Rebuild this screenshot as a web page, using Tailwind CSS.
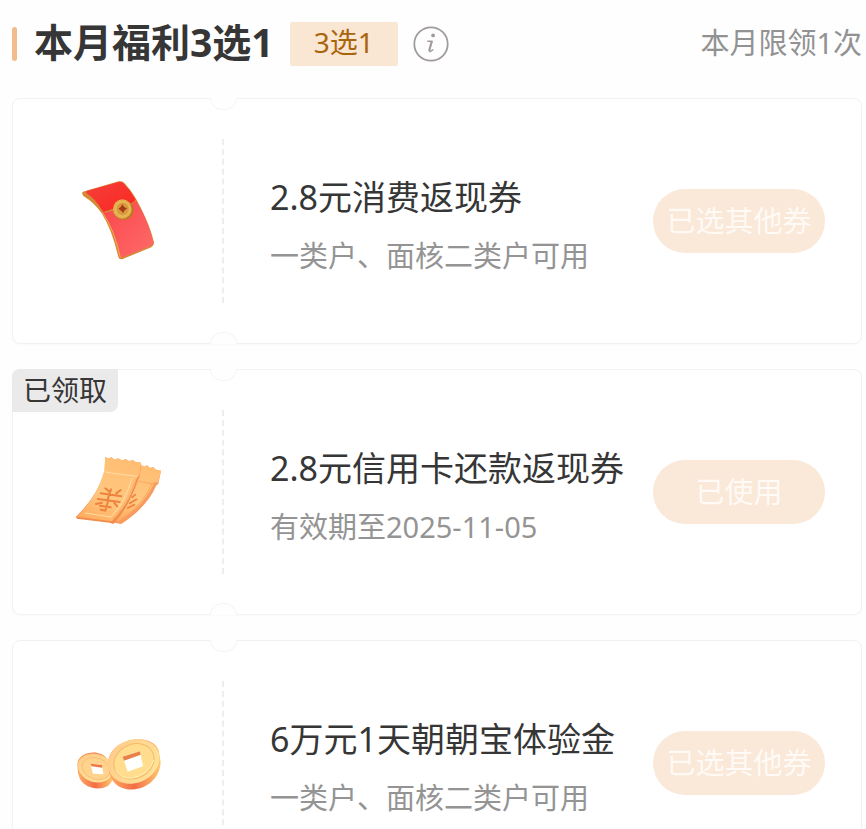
<!DOCTYPE html>
<html lang="zh-CN">
<head>
  <meta charset="UTF-8">
  <meta name="viewport" content="width=device-width, initial-scale=1.0">
  <title>本月福利3选1</title>
  <script src="https://cdn.jsdelivr.net/npm/@tailwindcss/browser@4"></script>
</head>
<body class="h-screen overflow-hidden bg-[#fefefe] font-['Noto_Sans','Noto_Sans_CJK_SC',sans-serif] text-[#363636]">
  <main class="pl-3 pr-1">
    <!-- Section header -->
    <header class="flex h-[98px] items-start justify-between pt-5">
      <div class="flex h-12 items-center">
        <span class="h-[34px] w-[5px] rounded-full bg-[#f1bd8c]"></span>
        <h1 class="ml-[17px] pb-1 text-[39px] leading-[44px] font-bold">本月福利3选1</h1>
        <span class="ml-4 rounded-xs bg-[#f9e6d3] px-6 pb-1 text-[28px] leading-10 text-[#a9650c]">3选1</span>
        <button type="button" aria-label="活动说明" class="ml-[15px]">
          <svg class="size-9" viewBox="0 0 36 36" fill="none">
            <circle cx="18" cy="18" r="16.7" stroke="#a19b9d" stroke-width="1.8" />
            <path d="M14.8 15.2h4.3l-2.6 9.2c-.3 1.6 1 1.6 3.4-.6" stroke="#a19b9d" stroke-width="1.4" stroke-linecap="round" stroke-linejoin="round" />
            <path d="M18.7 15.2l-2.6 9.6" stroke="#a19b9d" stroke-width="2" />
            <circle cx="20.1" cy="9.4" r="1.9" fill="#a19b9d" />
          </svg>
        </button>
      </div>
      <p class="text-[29px] leading-[46px] text-[#929292]">本月限领1次</p>
    </header>

    <!-- Coupons -->
    <ul class="space-y-[25px]">
      <li class="relative flex items-stretch rounded-lg border border-[#f2f2f2] bg-white shadow-xs shadow-black/2">
        <span class="absolute -top-px left-[197px] h-3 w-[27px] rounded-b-full border border-t-0 border-[#f5f5f5] bg-[#fefefe]"></span>
        <span class="absolute -bottom-px left-[197px] h-3 w-[27px] rounded-t-full border border-b-0 border-[#f5f5f5] bg-[#fefefe]"></span>
        <div class="flex w-[209px] items-center justify-center">
          <svg class="size-[120px]" viewBox="-6 3 360 360">
            <defs>
              <linearGradient id="flap" x1="0" y1="0" x2="1" y2="1">
                <stop offset="0" stop-color="#f5403c" />
                <stop offset="1" stop-color="#fb2620" />
              </linearGradient>
              <linearGradient id="envelope" x1="0" y1="0" x2="1" y2="1">
                <stop offset="0" stop-color="#f9474a" />
                <stop offset="1" stop-color="#ff6a6a" />
              </linearGradient>
            </defs>
            <path d="M66 100Q66 95 73 94L176 64Q188 62 194 70Q224 103 243 145Q270 198 282 247Q283 256 274 262L188 297Q178 300 175 291Q156 209 125 160Q103 128 70 108Z" fill="#d68a35" />
            <path d="M126 153L229 124Q263 180 280 245Q281 253 273 257L187 292Q180 293 178 286Q160 207 126 153Z" fill="url(#envelope)" />
            <path d="M127 157Q164 211 181 292" fill="none" stroke="#eeb057" stroke-width="3" />
            <path d="M70 103Q110 125 136 158L165 150L207 140L228 122L223 118L160 132L129 151Z" fill="#d78b36" />
            <path d="M80 93L176 66Q187 64 192 71Q212 91 227 119Q222 127 210 132L165 145L137 154Q129 155 125 149Q108 118 78 98Z" fill="url(#flap)" />
            <ellipse cx="190" cy="150" rx="31" ry="30" fill="#b97a20" />
            <ellipse cx="187" cy="147" rx="28" ry="29" fill="#e7ae4c" />
            <ellipse cx="188" cy="147" rx="20" ry="21" fill="#d79a3c" stroke="#f4ca75" stroke-width="2" />
            <path d="M187 132Q190 142 202 145Q192 150 189 159Q185 151 175 146Q184 142 187 132Z" fill="#a63b17" />
          </svg>
        </div>
        <div class="my-10 border-l-2 border-dashed border-[#eeeeee]"></div>
        <div class="min-w-0 flex-1 pt-[74px] pb-[67px] pl-[46px]">
          <h2 class="text-[34px] leading-[48px]">2.8元消费返现券</h2>
          <p class="mt-[15px] text-[29px] leading-10 text-[#949494]">一类户、面核二类户可用</p>
        </div>
        <button type="button" disabled class="mr-9 h-16 w-[172px] shrink-0 self-center rounded-full bg-[#fae8d9] text-[29px] text-[#fffaf5]">已选其他券</button>
      </li>

      <li class="relative flex items-stretch rounded-lg border border-[#f2f2f2] bg-white shadow-xs shadow-black/2">
        <span class="absolute -top-px -left-px rounded-tl-lg rounded-br-lg bg-[#eaeaea] px-[11px] text-[28px] leading-[43px]">已领取</span>
        <span class="absolute -top-px left-[197px] h-3 w-[27px] rounded-b-full border border-t-0 border-[#f5f5f5] bg-[#fefefe]"></span>
        <span class="absolute -bottom-px left-[197px] h-3 w-[27px] rounded-t-full border border-b-0 border-[#f5f5f5] bg-[#fefefe]"></span>
        <div class="flex w-[209px] items-center justify-center">
          <svg class="size-[120px]" viewBox="-6 6 360 360">
            <defs>
              <linearGradient id="ticket" x1="0.7" y1="0" x2="0.2" y2="1">
                <stop offset="0" stop-color="#ffbe72" />
                <stop offset="0.6" stop-color="#ffc77f" />
                <stop offset="1" stop-color="#ffad5f" />
              </linearGradient>
            </defs>
            <!-- back ticket -->
            <path d="M244 104L252 110L261 106L270 114L279 111L288 119L303 122L295 162L289 166Q262 231 184 282L166 279L150 273L205 210Z" fill="#f99b5e" />
            <path d="M244 104L252 110L261 106L270 114L279 111L288 119L303 122L294 158L284 156Q254 226 176 274L155 270Q213 218 235 150Z" fill="url(#ticket)" />
            <path d="M276 162Q250 224 184 266M238 154L292 164" fill="none" stroke="#f49852" stroke-width="2" />
            <path d="M216 202l10-8M209 220l21-12M203 234l20-10" stroke="#ef8040" stroke-width="5" stroke-linecap="round" />
            <!-- front ticket -->
            <path d="M136 80L144 86L154 82L164 89L175 85L186 92L197 87L208 94L218 90L228 97L243 98L239 140L232 148Q211 227 160 282L149 278L50 266L48 260Q109 202 135 125Z" fill="#f28c4d" />
            <path d="M136 80L144 86L154 82L164 89L175 85L186 92L197 87L208 94L218 90L228 97L243 98L238 137L231 143Q208 220 156 274L51 260Q110 202 132 125Z" fill="url(#ticket)" />
            <path d="M134 125L159 130L232 139M216 144Q196 215 153 261L75 249" fill="none" stroke="#ffdda4" stroke-width="3" />
            <path d="M228 146Q205 216 157 270" fill="none" stroke="#f5a15b" stroke-width="2" />
            <path d="M136 175l11 9M182 180l-13 10M122 190l62 9M113 207l66 9M108 222l18-4M163 219l9 10M153 178L143 208M120 227l32 5M144 214l-8 28l-14 -3" fill="none" stroke="#ee8340" stroke-width="6" stroke-linecap="round" />
          </svg>
        </div>
        <div class="my-10 border-l-2 border-dashed border-[#eeeeee]"></div>
        <div class="min-w-0 flex-1 pt-[74px] pb-[67px] pl-[46px]">
          <h2 class="text-[34px] leading-[48px] whitespace-nowrap">2.8元信用卡还款返现券</h2>
          <p class="mt-[15px] text-[29px] leading-10 text-[#949494]">有效期至2025-11-05</p>
        </div>
        <button type="button" disabled class="mr-9 h-16 w-[172px] shrink-0 self-center rounded-full bg-[#fae8d9] text-[29px] text-[#fffaf5]">已使用</button>
      </li>

      <li class="relative flex items-stretch rounded-lg border border-[#f2f2f2] bg-white shadow-xs shadow-black/2">
        <span class="absolute -top-px left-[197px] h-3 w-[27px] rounded-b-full border border-t-0 border-[#f5f5f5] bg-[#fefefe]"></span>
        <span class="absolute -bottom-px left-[197px] h-3 w-[27px] rounded-t-full border border-b-0 border-[#f5f5f5] bg-[#fefefe]"></span>
        <div class="flex w-[209px] items-center justify-center">
          <svg class="size-[120px]" viewBox="-6 -51 360 360">
            <defs>
              <linearGradient id="coin" x1="0" y1="0" x2="1" y2="1">
                <stop offset="0" stop-color="#ffc987" />
                <stop offset="1" stop-color="#ffe69b" />
              </linearGradient>
              <linearGradient id="coin-edge" x1="0" y1="0" x2="1" y2="0">
                <stop offset="0" stop-color="#ffb067" />
                <stop offset="0.5" stop-color="#f36d47" />
                <stop offset="1" stop-color="#ffca70" />
              </linearGradient>
            </defs>
            <!-- small coin -->
            <path d="M52 134C50 96 119 83 142 117L159 162C161 207 113 213 82 198Q51 183 52 134Z" fill="url(#coin-edge)" />
            <ellipse cx="106" cy="144" rx="53" ry="42" transform="rotate(20 106 144)" fill="url(#coin)" />
            <ellipse cx="108" cy="146" rx="43" ry="32" transform="rotate(20 108 146)" fill="#ffd38c" stroke="#f8b46c" stroke-width="2" />
            <path d="M91 131L126 135L130 163L99 161Z" fill="#fff" />
            <path d="M91 131L126 135L127 143L95 139Z" fill="#ee7544" />
            <!-- large coin -->
            <path d="M144 125C149 58 272 31 296 91L302 126C300 182 249 214 200 208C161 201 143 169 144 125Z" fill="url(#coin-edge)" />
            <ellipse cx="221" cy="124" rx="79" ry="65" transform="rotate(-22 221 124)" fill="url(#coin)" />
            <ellipse cx="222" cy="124" rx="62" ry="51" transform="rotate(-25 222 124)" fill="#ffdc8e" stroke="#f3bb68" stroke-width="3" />
            <path d="M167 148Q179 178 216 174Q267 164 281 120" fill="none" stroke="#fff0b7" stroke-width="3" />
            <path d="M188 110L240 94L249 139L203 155Z" fill="#fff" />
            <path d="M188 110L240 94L242 104L192 122Z" fill="#e98048" />
          </svg>
        </div>
        <div class="my-10 border-l-2 border-dashed border-[#eeeeee]"></div>
        <div class="min-w-0 flex-1 pt-[74px] pb-[67px] pl-[46px]">
          <h2 class="text-[34px] leading-[48px] whitespace-nowrap">6万元1天朝朝宝体验金</h2>
          <p class="mt-[15px] text-[29px] leading-10 text-[#949494]">一类户、面核二类户可用</p>
        </div>
        <button type="button" disabled class="mr-9 h-16 w-[172px] shrink-0 self-center rounded-full bg-[#fae8d9] text-[29px] text-[#fffaf5]">已选其他券</button>
      </li>
    </ul>
  </main>
</body>
</html>
